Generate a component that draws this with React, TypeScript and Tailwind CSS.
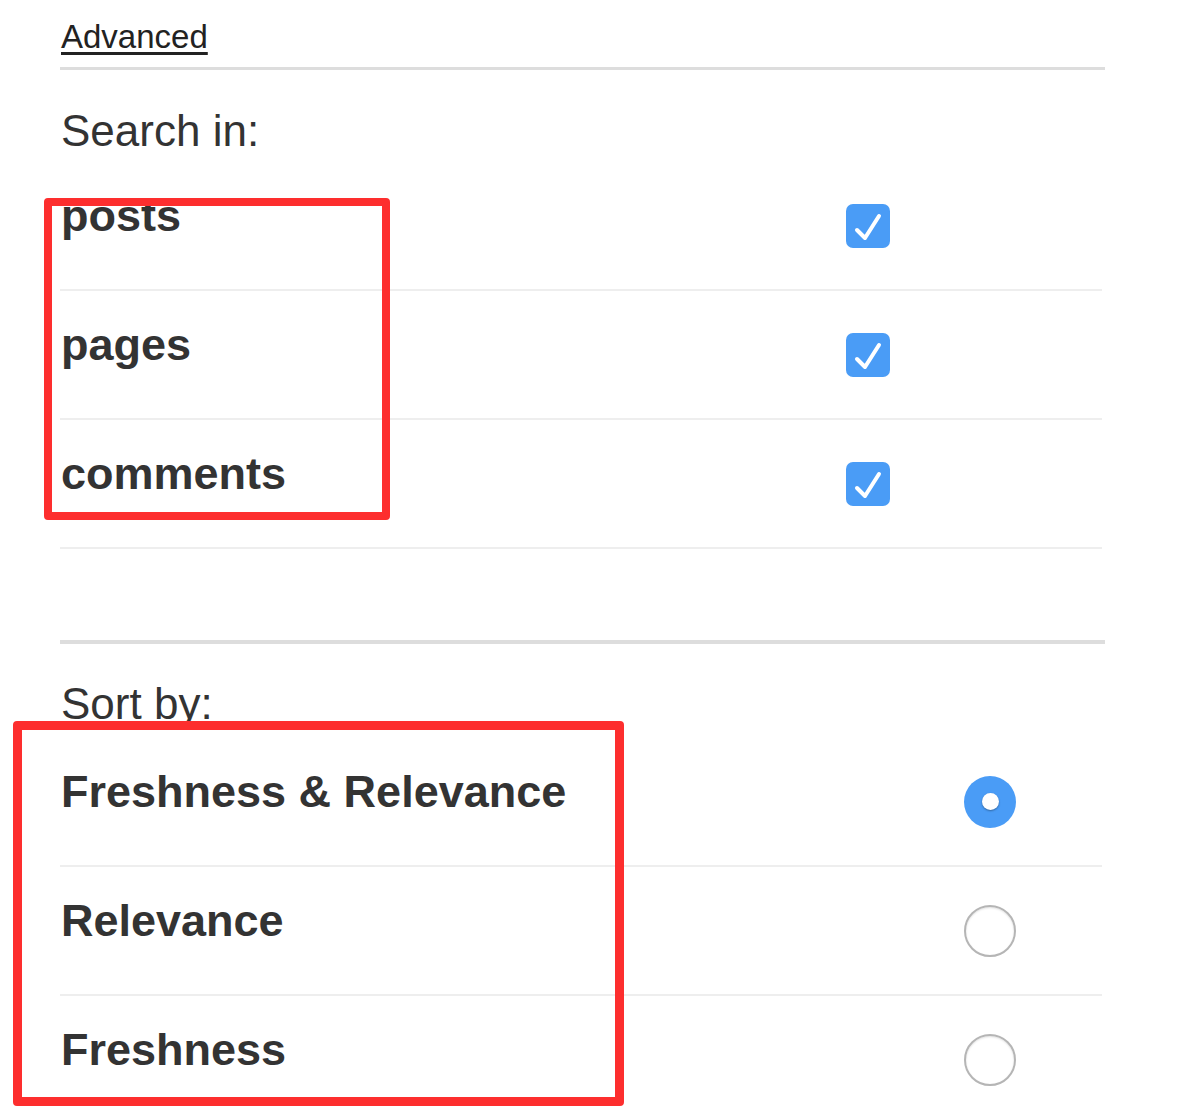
import React from "react";

const font = { fontFamily: '"Liberation Sans", Arial, sans-serif' };

function Check() {
  return (
    <div className="w-[44px] h-[44px] rounded-[7px] bg-[#4a9cf6] flex items-center justify-center">
      <svg width="44" height="44" viewBox="0 0 44 44">
        <polyline points="11,26 19,34 33,12" fill="none" stroke="#fff" strokeWidth="4" strokeLinecap="round" strokeLinejoin="round" />
      </svg>
    </div>
  );
}

function Radio({ on }: { on?: boolean }) {
  return on ? (
    <div className="w-[52px] h-[52px] rounded-full bg-[#4a9cf6] flex items-center justify-center">
      <div className="w-[17px] h-[17px] rounded-full bg-white shadow-[0_1px_2px_rgba(0,0,0,0.35)]" />
    </div>
  ) : (
    <div className="w-[52px] h-[52px] rounded-full border-2 border-[#b5b5b5] bg-white shadow-[inset_0_1px_2px_rgba(0,0,0,0.12)]" />
  );
}

function Row({ label, children, mr }: { label: string; children: React.ReactNode; mr: string }) {
  return (
    <div className="h-[129px] w-[1042px] border-b-2 border-[#eeeeee] flex justify-between">
      <div className="pt-[28px] pl-px text-[45px] leading-[52px] font-bold text-[#333]">{label}</div>
      <div className={`self-center ${mr}`}>{children}</div>
    </div>
  );
}

export default function App() {
  return (
    <div className="relative w-[1194px] h-[1106px] overflow-hidden bg-white" style={font}>
      <div className="pl-[60px] pt-[18px]">
        <a href="#" className="inline-block pl-px text-[33px] leading-[38px] text-[#222] underline decoration-[3px] underline-offset-[4px]">
          Advanced
        </a>
        <div className="mt-[11px] h-[3px] w-[1045px] bg-[#dddddd]" />
        <div className="mt-[36px] pl-px text-[44px] leading-[50px] text-[#333]">Search in:</div>
        <div className="mt-[6px]">
          <Row label="posts" mr="mr-[212px]"><Check /></Row>
          <Row label="pages" mr="mr-[212px]"><Check /></Row>
          <Row label="comments" mr="mr-[212px]"><Check /></Row>
        </div>
        <div className="mt-[91px] h-[4px] w-[1045px] bg-[#dddddd]" />
        <div className="mt-[35px] pl-px text-[44px] leading-[50px] text-[#333]">Sort by:</div>
        <div className="mt-[9px]">
          <Row label="Freshness & Relevance" mr="mr-[86px]"><Radio on /></Row>
          <Row label="Relevance" mr="mr-[86px]"><Radio /></Row>
          <Row label="Freshness" mr="mr-[86px]"><Radio /></Row>
        </div>
      </div>
      <div className="absolute left-[44px] top-[198px] w-[346px] h-[322px] border-[8px] border-[#fd2e2e] rounded-[4px] pointer-events-none" />
      <div className="absolute left-[13px] top-[721px] w-[611px] h-[385px] border-[9px] border-[#fd2e2e] rounded-[4px] pointer-events-none" />
    </div>
  );
}
